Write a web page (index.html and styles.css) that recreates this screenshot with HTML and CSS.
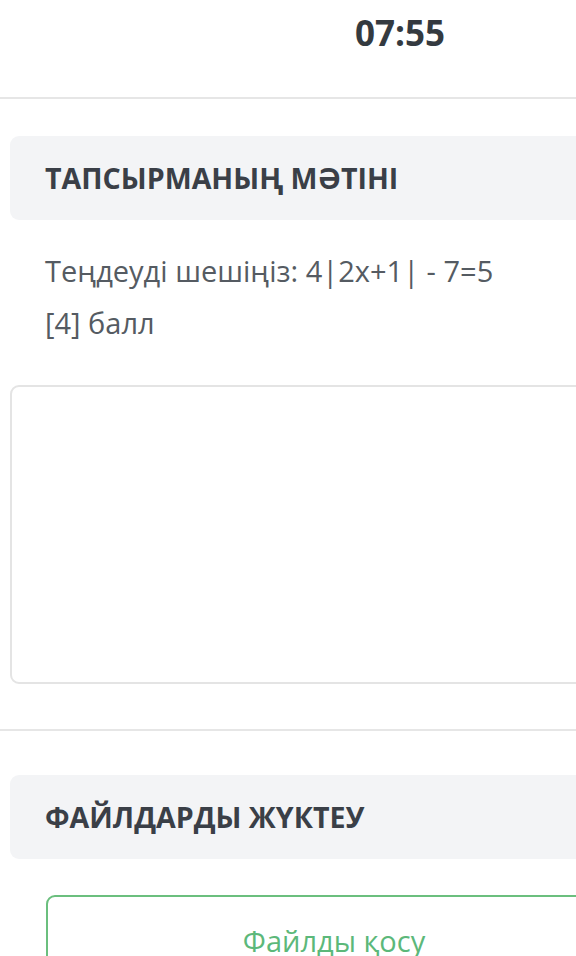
FILE: index.html
```html
<!DOCTYPE html>
<html lang="kk">
<head>
    <meta charset="UTF-8">
    <meta name="viewport" content="width=device-width, initial-scale=1.0">
    <title>Тапсырма</title>
    <link rel="stylesheet" href="styles.css">
</head>
<body>
    <div class="page">
        <header class="topbar">
            <div class="timer">07:55</div>
        </header>

        <section class="task">
            <div class="card-title">ТАПСЫРМАНЫҢ МӘТІНІ</div>
            <div class="task-text">
                <p>Теңдеуді шешіңіз: 4|2x+1| - 7=5</p>
                <p>[4] балл</p>
            </div>
            <textarea class="answer"></textarea>
        </section>

        <section class="upload">
            <div class="card-title">ФАЙЛДАРДЫ ЖҮКТЕУ</div>
            <button class="add-file">Файлды қосу</button>
        </section>
    </div>
</body>
</html>
```

FILE: styles.css
```css
body {
    margin: 0;
    background: #fff;
    font-family: "Open Sans", Arial, sans-serif;
    color: #3a3f47;
    overflow: hidden;
}
.page {
    width: 800px;
}
.topbar {
    height: 97px;
    border-bottom: 2px solid #e6e6e6;
    text-align: center;
}
.timer {
    font-size: 35px;
    font-weight: bold;
    color: #343a40;
    line-height: 35px;
    padding-top: 15px;
}
.task,
.upload {
    width: 648px;
    padding: 0 10px;
}
.task {
    padding-top: 37px;
    padding-bottom: 45px;
    border-bottom: 2px solid #e6e6e6;
    width: 780px;
    padding-right: 10px;
}
.task .card-title,
.task .answer {
    width: 648px;
}
.card-title {
    background: #f3f4f6;
    border-radius: 9px;
    height: 84px;
    line-height: 84px;
    padding-left: 35px;
    box-sizing: border-box;
    font-size: 28.6px;
    font-weight: bold;
    color: #3a3f47;
}
.task-text {
    padding: 25px 35px 36px;
    font-size: 29px;
    color: #555b62;
}
.task-text p {
    margin: 0;
    line-height: 52px;
}
.answer {
    display: block;
    height: 299px;
    box-sizing: border-box;
    border: 2px solid #e4e4e4;
    border-radius: 9px;
    resize: none;
    margin: 0;
}
.upload {
    padding-top: 44px;
}
.add-file {
    display: block;
    margin: 36px 36px 0;
    width: 576px;
    height: 90px;
    background: #fff;
    border: 2px solid #6bbf7e;
    border-radius: 9px;
    font-family: "Open Sans", Arial, sans-serif;
    font-size: 29px;
    color: #5cb87a;
}
```
